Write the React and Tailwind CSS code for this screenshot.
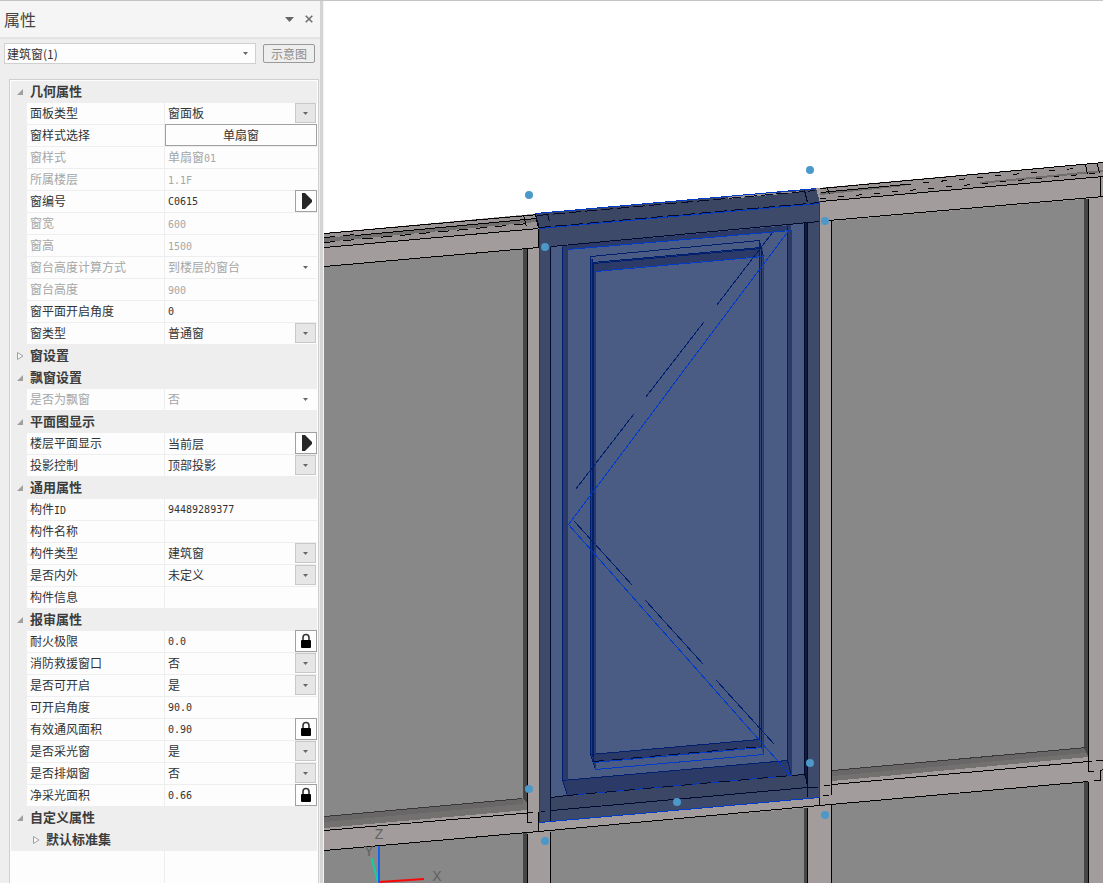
import { useState } from 'react';

const GROUPS = [
  {
    title: '几何属性',
    rows: [
      { label: '面板类型', value: '窗面板', kind: 'select' },
      { label: '窗样式选择', value: '单扇窗', kind: 'button' },
      { label: '窗样式', value: '单扇窗01', disabled: true },
      { label: '所属楼层', value: '1.1F', disabled: true },
      { label: '窗编号', value: 'C0615', kind: 'more' },
      { label: '窗宽', value: '600', disabled: true },
      { label: '窗高', value: '1500', disabled: true },
      { label: '窗台高度计算方式', value: '到楼层的窗台', kind: 'select', disabled: true },
      { label: '窗台高度', value: '900', disabled: true },
      { label: '窗平面开启角度', value: '0' },
      { label: '窗类型', value: '普通窗', kind: 'select' },
    ],
  },
  { title: '窗设置', collapsed: true, rows: [] },
  {
    title: '飘窗设置',
    rows: [{ label: '是否为飘窗', value: '否', kind: 'select', disabled: true }],
  },
  {
    title: '平面图显示',
    rows: [
      { label: '楼层平面显示', value: '当前层', kind: 'more' },
      { label: '投影控制', value: '顶部投影', kind: 'select' },
    ],
  },
  {
    title: '通用属性',
    rows: [
      { label: '构件ID', value: '94489289377' },
      { label: '构件名称', value: '' },
      { label: '构件类型', value: '建筑窗', kind: 'select' },
      { label: '是否内外', value: '未定义', kind: 'select' },
      { label: '构件信息', value: '' },
    ],
  },
  {
    title: '报审属性',
    rows: [
      { label: '耐火极限', value: '0.0', kind: 'lock' },
      { label: '消防救援窗口', value: '否', kind: 'select' },
      { label: '是否可开启', value: '是', kind: 'select' },
      { label: '可开启角度', value: '90.0' },
      { label: '有效通风面积', value: '0.90', kind: 'lock' },
      { label: '是否采光窗', value: '是', kind: 'select' },
      { label: '是否排烟窗', value: '否', kind: 'select' },
      { label: '净采光面积', value: '0.66', kind: 'lock' },
    ],
  },
  { title: '自定义属性', rows: [] },
  { title: '默认标准集', collapsed: true, nested: true, rows: [] },
];

// Latin runs use a half-width mono face next to the full-width Chinese text
const MixedText = ({ text }) =>
  text.split(/([\x20-\x7e]+)/).map((part, i) =>
    /^[\x20-\x7e]+$/.test(part) ? (
      <span key={i} className="font-['DejaVu_Sans_Mono',monospace] text-[10px]">{part}</span>
    ) : (
      part
    )
  );

const DownArrow = () => (
  <svg width="5" height="3" viewBox="0 0 5 3" aria-hidden="true">
    <path d="M0 0h5L2.5 3z" fill="#666" />
  </svg>
);

const CategoryArrow = ({ open }) => (
  <svg width="8" height="8" viewBox="0 0 8 8" aria-hidden="true">
    {open ? (
      <path d="M7 1v6H1z" fill="#a0a0a0" />
    ) : (
      <path d="M1.500 .5v7L7 4z" fill="#f8f8f8" stroke="#a0a0a0" />
    )}
  </svg>
);

const ValueCell = ({ id, row }) => {
  const { value, kind, disabled, label } = row;

  if (kind === 'button') {
    return (
      <button id={id} type="button" className="flex-1 h-[22px] -mt-px border border-[#a0a0a0] bg-[#fdfdfd] text-center">
        {value}
      </button>
    );
  }

  if (kind === 'select') {
    return (
      <div className="relative flex flex-1">
        <select id={id} disabled={disabled} defaultValue={value} className="h-5 w-full appearance-none bg-transparent pl-[3px] opacity-100 outline-none">
          <option>{value}</option>
        </select>
        <span
          className={`pointer-events-none absolute right-px top-0 flex h-5 w-[21px] items-center justify-center ${
            disabled ? '' : 'border border-[#c8c8c8] bg-[#e6e6e6]'
          }`}
        >
          <DownArrow />
        </span>
      </div>
    );
  }

  if (disabled) {
    return <output id={id} className="flex-1 pl-[3px] leading-5"><MixedText text={value} /></output>;
  }

  return (
    <>
      <input
        id={id}
        type="text"
        defaultValue={value}
        className={`h-5 min-w-0 flex-1 bg-transparent pl-[3px] outline-none ${
          /^[\x20-\x7e]+$/.test(value) ? "font-['DejaVu_Sans_Mono',monospace] text-[10px]" : ''
        }`}
      />
      {kind && (
        <button
          type="button"
          aria-label={label}
          className="flex h-[22px] w-[22px] -mt-px shrink-0 items-center justify-center border border-[#a0a0a0] bg-[#fdfdfd]"
        >
          {kind === 'more' ? (
            <svg width="12" height="18" viewBox="0 0 12 18">
              <path d="M2 1h3l7 7v2l-7 7H2z" fill="#262626" />
            </svg>
          ) : (
            <svg width="12" height="16" viewBox="0 0 12 16">
              <path d="M3 8V4.500a3 3 0 0 1 6 0V8" fill="none" stroke="#333" strokeWidth="1.600" />
              <rect x="1" y="7" width="10" height="8" rx="1" fill="#000" />
            </svg>
          )}
        </button>
      )}
    </>
  );
};

const PropertyPanel = () => {
  const [open, setOpen] = useState(GROUPS.map((g) => !g.collapsed));
  const toggle = (i) => setOpen(open.map((o, j) => (j === i ? !o : o)));

  return (
    <aside className="flex w-[323px] shrink-0 flex-col overflow-hidden border-r-[3px] border-[#d4d4d4] bg-[#eeeeee]">
      <header className="flex h-[38px] shrink-0 items-center border-b-2 border-[#e4e4e4] bg-[#f5f5f5] pl-1 pr-px">
        <h1 className="flex-1 text-base text-[#444]">属性</h1>
        <button type="button" aria-label="菜单" className="flex h-5 w-5 items-center justify-center">
          <svg width="9" height="5" viewBox="0 0 9 5"><path d="M0 0h9L4.500 5z" fill="#666" /></svg>
        </button>
        <button type="button" aria-label="关闭" className="flex h-5 w-5 items-center justify-center">
          <svg width="8" height="8" viewBox="0 0 8 8"><path d="M.7.7l6.600 6.600M7.300.7L.7 7.300" stroke="#707070" strokeWidth="1.600" /></svg>
        </button>
      </header>

      <div className="flex shrink-0 items-center gap-[7px] pl-1 pr-[5px] pt-1">
        <div className="relative flex h-[21px] flex-1">
          <select aria-label="构件" className="w-full appearance-none border border-[#d0d0d0] bg-[#fdfdfd] pl-0.5 text-[#333]">
            <option>建筑窗(1)</option>
          </select>
          <span className="pointer-events-none absolute right-2 top-0 flex h-full items-center"><DownArrow /></span>
        </div>
        <button type="button" className="h-[19px] w-[52px] rounded-xs border border-[#999] leading-4 text-[#8c8c8c]">
          示意图
        </button>
      </div>

      <div className="ml-[9px] mr-px mt-[15px] flex flex-1 flex-col border border-b-0 border-[#cfcfcf] bg-[#fdfdfd] pl-px pr-px pt-px">
        {GROUPS.map((group, g) => (
          <section key={group.title} className="shrink-0 bg-[#eeeeee]">
            <h2>
              <button
                type="button"
                onClick={() => toggle(g)}
                aria-expanded={open[g]}
                className={`flex h-[22px] w-full items-center text-[13px] font-bold leading-5 text-[#3c3c3c] ${group.nested ? 'pl-[21px]' : 'pl-[5px]'}`}
              >
                <span className="w-[14px]"><CategoryArrow open={open[g]} /></span>
                <span className="pb-0.5">{group.title}</span>
              </button>
            </h2>
            {open[g] &&
              group.rows.map((row, r) => {
                const id = `prop-${g}-${r}`;
                return (
                  <div key={id} className={`ml-4 flex h-[22px] border-b border-[#eeeeee] bg-[#fdfdfd] ${row.disabled ? 'text-[#a6a6a6]' : 'text-[#333]'}`}>
                    <label htmlFor={id} className="w-[138px] shrink-0 border-r border-[#eeeeee] pl-[3px] leading-5">
                      <MixedText text={row.label} />
                    </label>
                    <ValueCell id={id} row={row} />
                  </div>
                );
              })}
          </section>
        ))}
        <div className="ml-4 w-[138px] flex-1 border-r border-[#eeeeee]" />
      </div>
    </aside>
  );
};

const HANDLES = [
  [529, 195], [810, 170], [545, 247], [825, 221], [810, 763],
  [677, 802], [825, 815], [545, 841], [529, 789],
];

const Scene = () => (
  <svg
    className="block h-full w-full"
    viewBox="324 1 779 882"
    preserveAspectRatio="xMinYMin slice"
    shapeRendering="crispEdges"
    role="img"
    aria-label="三维视图"
  >
    {/* frame silhouette */}
    <path d="M324 233L1103 162V883H324z" fill="#a39c9c" />
    <path d="M324 233L538 214V228L324 247zM820 188L1103 162V176L820 201z" fill="#999292" />
    <path d="M324 238L536 218V222L324 242zM820 192L905 185V186L820 195zM980 182L1103 170V172L980 184z" fill="#706e6e" />

    {/* glass panes */}
    <g fill="#888888">
      <path d="M324 267L523 249V799L324 817z" />
      <path d="M832 221L1084 199V748L832 771z" />
      <path d="M324 851L523 833V883H324z" />
      <path d="M551 830L804 808V883H551z" />
      <path d="M832 805L1084 782V883H832z" />
    </g>
    <path d="M324 817L523 799L527 802V810L324 828z" fill="#737070" />
    <path d="M324 817L523 799V804L324 822z" fill="#696767" />
    <path d="M832 771L1086 748L1088 757L832 781z" fill="#737070" />
    <path d="M832 771L1086 748V753L832 776z" fill="#696767" />
    <path d="M523 249h4V802l-4-3zM523 833h4V883h-4zM804 808h3V883h-3zM1084 199h4V756l-4-8zM1084 782h4V883h-4z" fill="#464646" />

    <g transform="translate(.5 .5)" fill="none" stroke="#000">
      <path d="M324 816L522 798M832 770L1086 747" stroke="#383838" />
      <path d="M324 233L538 214M355 235L536 218M324 247L538 228M324 266L538 247V228" />
      <path d="M324 237L355 234M324 242L528 223" strokeDasharray="11 8" />
      <path d="M523 215l3 11M535 214l3 14M527 248V822H531" />
      <path d="M324 830L533 812M324 850L538 831V811M538 831L819 805L1088 781" />
      <path d="M550 831V883M527 833V883M807 807V883M831 804V883M831 220V794M819 797V805" />
      <path d="M820 188L1103 162M820 192L905 184M820 201L1103 176M828 220L1103 196M1100 176V195" />
      <path d="M905 184L1085 167M820 198L1103 172" strokeDasharray="6 12" />
      <path d="M827 188l2 6M1085 164l2 10M1097 164l2 9" />
      <path d="M832 784L1088 761H1091M1095 760H1103M1088 198V771H1093M1093 780H1100V770L1103 769M1088 781V883" />
      <path d="M823 785H829M822 795H828" />
    </g>

    {/* selected window: outer frame and sash */}
    <path d="M535 214L816 188L820 203V797L539 823V228z" fill="#3e4a6a" />
    <path d="M535 214L816 188L819 203L539 228z" fill="#3b4662" />
    <path d="M551 246L804 223V775L551 797z" fill="#4a5b84" />
    <path d="M804 223h4V787l-4-13z" fill="#121c3a" />
    <path d="M551 798L804 774L807 787L551 810z" fill="#3b4664" />
    <path d="M562 246L791 225V230L567 250V796L562 780z" fill="#2b3a66" />
    <path d="M787 226h4V775l-4-15z" fill="#2b3a66" />
    <path d="M562 780L787 760L791 775L567 796z" fill="#2b3a66" />
    <path d="M593 263L761 248L763 256L595 271V769L591 754V258z" fill="#2b3a66" />
    <path d="M591 754L759 739L762 747L593 762z" fill="#2b3a66" />
    <path d="M759 248h4V754l-4-14z" fill="#34456f" />
    <path d="M728 196L804 191L805 192L728 199z" fill="#999292" />

    <g transform="translate(.5 .5)" fill="none" stroke="#000a2c">
      <path d="M537 215L815 190M539 227L819 202" strokeDasharray="12 4" />
      <path d="M551 246L819 221M550 246V820M807 222V796M804 222V774" />
      <path d="M551 797L567 795M791 775L805 774L807 787M551 810L807 787H817M540 811H544" />
      <path d="M535 214l4 14M547 214l2 7M804 190l3 12" />
    </g>

    <g transform="translate(.5 .5)" fill="none" stroke="#001f6e">
      <path d="M562 246V780L787 760V225" />
      <path d="M562 780l5 15M787 760l4 15" />
      <path d="M590 754V256L759 240V739L590 754l5 15" />
      <path d="M593 762V263L761 248V747M592 258V756" />
      <path d="M592 262L760 247M759 240l4 16" />
      <path d="M772 232L716 305M703 322L645 397M633 414L575 489M574 521L632 585M645 600L703 664M716 680L774 744" />
    </g>

    <g transform="translate(.5 .5)" fill="none" stroke="#003ac8">
      <path d="M535 213L816 188M539 228L819 203V797L539 822z" />
      <path d="M567 795V249L791 230V775zM595 769V271L763 256V754z" />
      <path d="M593 762L762 747" />
      <path d="M789 229L568 524L791 776" />
    </g>
    <g transform="translate(.5 .5)" fill="none" stroke="#000a2c" strokeDasharray="11 8">
      <path d="M567 795L791 775M593 761L762 746" />
    </g>

    <g fill="#4b98c9" shapeRendering="auto">
      {HANDLES.map(([x, y]) => (
        <circle key={`${x}-${y}`} cx={x} cy={y} r="4" />
      ))}
    </g>

    {/* axis triad */}
    <g fill="none" strokeWidth="2" shapeRendering="auto">
      <path d="M379 882L424 879" stroke="#f80808" />
      <path d="M371.500 858L378 882" stroke="#14d0a0" />
      <path d="M379 846V883" stroke="#1464f0" />
    </g>
    <g fill="#606060" className="font-['Liberation_Sans',sans-serif] text-[14px]" textAnchor="middle">
      <text x="379" y="839">Z</text>
      <text x="369" y="856">Y</text>
      <text x="437" y="881">X</text>
    </g>
  </svg>
);

const App = () => (
  <div className="flex h-screen overflow-hidden border-t border-[#c4c4c4] bg-white font-['Noto_Sans_CJK_SC',sans-serif] text-xs">
    <PropertyPanel />
    <main className="min-w-0 flex-1 border-l border-[#f4f4f4]">
      <Scene />
    </main>
  </div>
);

export default App;
